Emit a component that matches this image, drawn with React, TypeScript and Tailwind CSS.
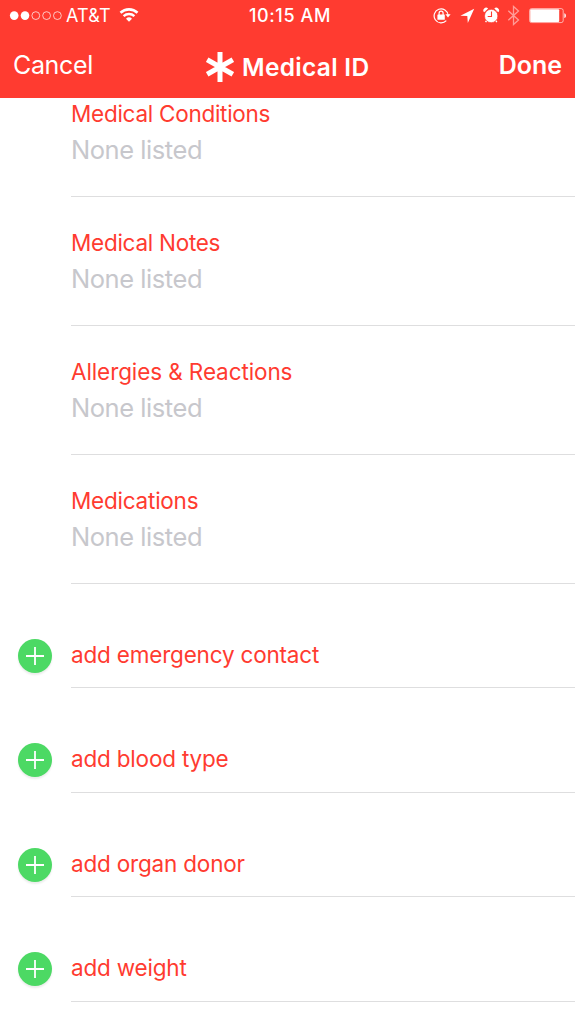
const sections = [
  { title: "Medical Conditions", tracking: "tracking-[-0.27px]" },
  { title: "Medical Notes", tracking: "tracking-[-0.27px]" },
  { title: "Allergies & Reactions", tracking: "tracking-[-0.1px]" },
  { title: "Medications", tracking: "tracking-[-0.23px]" },
];

const addItems = [
  "add emergency contact",
  "add blood type",
  "add organ donor",
  "add weight",
];

const StatusIcons = () => (
  <svg className="h-8 w-[142px]" viewBox="433 0 142 32" fill="none">
    {/* rotation lock */}
    <path d="M446.3 20.6A7 7 0 1 1 448.1 15.2" stroke="#fff" strokeWidth="1.2" />
    <path d="M445.4 14.2h5.2l-2.6 3.4z" fill="#fff" />
    <rect x="437.4" y="14.4" width="7.4" height="5.4" rx="0.6" fill="#fff" />
    <path d="M439.1 15v-1.8a2 2 0 0 1 4 0V15" stroke="#fff" strokeWidth="1.2" />
    {/* location arrow */}
    <path d="M474.2 8.8L460.4 15.8l6.9.3.5 6.8z" fill="#fff" />
    {/* alarm clock */}
    <path d="M484.2 12.3a2.5 2.5 0 0 1 3.9-3.9zM494.3 8.4a2.5 2.5 0 0 1 3.9 3.9z" fill="#fff" />
    <path d="M487 20l-1.4 2.2M495.4 20l1.4 2.2" stroke="#fff" strokeWidth="1.4" />
    <circle cx="491.2" cy="16" r="6.7" fill="#fff" stroke="#ff3b30" strokeWidth="0.7" />
    <path d="M491.5 11.5v5h-3.8" stroke="#ff3b30" strokeWidth="1.1" />
    {/* bluetooth */}
    <path d="M508.3 10.8l10.2 9.2-5 4.6V6.4l5 4.6-10.2 9.2" stroke="#fff" strokeOpacity="0.5" strokeWidth="1.3" />
    {/* battery */}
    <rect x="529.6" y="8.6" width="33.6" height="14" rx="2" stroke="#fff" strokeOpacity="0.6" strokeWidth="1" />
    <rect x="530.2" y="9.2" width="29" height="12.8" rx="1" fill="#fff" />
    <path d="M564.4 13.3c2 .5 2 4.3 0 4.8z" fill="#fff" />
  </svg>
);

const SignalDots = () => (
  <svg className="h-8 w-[53px]" viewBox="9 0 53 32" fill="none" stroke="#fff">
    <circle cx="14.2" cy="15.6" r="4.3" fill="#fff" stroke="none" />
    <circle cx="25" cy="15.6" r="4.3" fill="#fff" stroke="none" />
    <circle cx="35.8" cy="15.6" r="3.9" strokeWidth="0.7" />
    <circle cx="46.6" cy="15.6" r="3.9" strokeWidth="0.7" />
    <circle cx="57.4" cy="15.6" r="3.9" strokeWidth="0.7" />
  </svg>
);

const Wifi = () => (
  <svg className="h-8 w-5" viewBox="119 0 20 32" fill="none" stroke="#fff">
    <path d="M120.5 12.8a12.2 12.2 0 0 1 17 0" strokeWidth="2.6" />
    <path d="M123.6 16.2a7.9 7.9 0 0 1 10.8 0" strokeWidth="2.4" />
    <path d="M126 18.8a4.3 4.3 0 0 1 6 0l-3 3z" fill="#fff" stroke="none" />
  </svg>
);

const Asterisk = () => (
  <svg className="h-[30px] w-7" viewBox="0 0 28 30" stroke="#fff" strokeWidth="5">
    <path d="M14 0v30M1.2 7.7l25.6 14.6M26.8 7.7L1.2 22.3" />
  </svg>
);

const AddButton = () => (
  <button className="flex size-[34px] items-center justify-center rounded-full bg-[#4cd964] shadow-[0_2px_2px_rgba(0,0,0,0.08)]">
    <svg className="size-[18px]" viewBox="0 0 18 18" stroke="#fff" strokeWidth="1.8">
      <path d="M9 0v18M0 9h18" />
    </svg>
  </button>
);

const App = () => {
  return (
    <div className="h-[1024px] w-[575px] overflow-hidden bg-white font-['Inter','Liberation_Sans',sans-serif]">
      <header className="relative z-10 h-[98px] bg-[#ff3b30] text-white">
        <div className="grid h-8 grid-cols-[249px_184px_142px]">
          <div className="flex pl-[9px]">
            <SignalDots />
            <span className="ml-1 w-[53px] text-[18px] leading-8 tracking-[0.2px]">AT&amp;T</span>
            <Wifi />
          </div>
          <span className="text-[18px] leading-8 font-medium tracking-[0.6px] whitespace-nowrap">10:15 AM</span>
          <StatusIcons />
        </div>
        <div className="grid h-[66px] grid-cols-[193px_189px_193px]">
          <button className="pl-[13px] text-left text-[25px] leading-[66px] tracking-[-0.35px]">Cancel</button>
          <div className="flex items-center gap-2 pt-1 pl-[13px]">
            <Asterisk />
            <h1 className="text-[24.5px] leading-[62px] font-semibold tracking-[0.3px] whitespace-nowrap">Medical ID</h1>
          </div>
          <button className="pr-[13px] text-right text-[25px] leading-[66px] font-semibold">Done</button>
        </div>
      </header>

      {/* list is scrolled, so the first section starts under the header */}
      <main className="-mt-[30px]">
        {sections.map((section) => (
          <div key={section.title} className="ml-[71px] h-[129px] border-b border-[#dededf] pt-[30px]">
            <h2 className={`text-[22.5px] leading-8 text-[#ff3b30] ${section.tracking}`}>
              {section.title}
            </h2>
            <p className="pt-1 text-[25.5px] leading-8 tracking-[-0.45px] text-[#c7c7cc]">None listed</p>
          </div>
        ))}

        {addItems.map((item) => (
          <div key={item} className="flex h-[104.4px] items-end">
            <div className="mb-[15.4px] ml-[18px] w-[34px]">
              <AddButton />
            </div>
            <div className="ml-[19px] flex-1 border-b border-[#dededf] pb-[16.4px] text-[22.5px] leading-8 tracking-[-0.19px] text-[#ff3b30]">
              {item}
            </div>
          </div>
        ))}
      </main>
    </div>
  );
};

export default App;
